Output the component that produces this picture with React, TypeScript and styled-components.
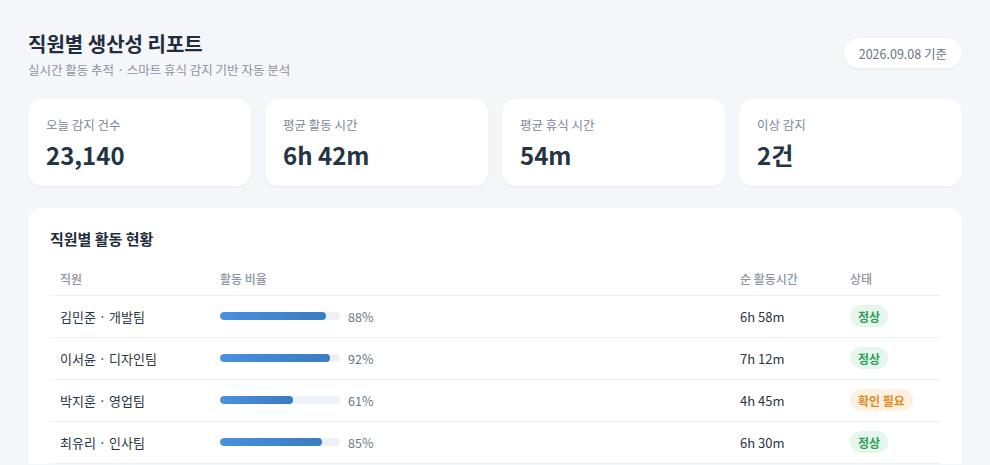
import React from "react";
import styled, { createGlobalStyle } from "styled-components";

const Global = createGlobalStyle`
  html, body { margin: 0; padding: 0; background: #f4f6fa; }
  body { font-family: "Noto Sans CJK KR", "Noto Sans", sans-serif; color: #1f2d3d; }
  * { box-sizing: border-box; }
`;

const Page = styled.div`
  padding: 29px 28px 0;
  display: flex;
  flex-direction: column;
`;

const Header = styled.header`
  display: flex;
  justify-content: space-between;
  align-items: flex-start;
  margin-bottom: 20px;
`;

const TitleBlock = styled.div`
  display: flex;
  flex-direction: column;
  gap: 2px;
`;

const Title = styled.h1`
  margin: 0;
  font-size: 20px;
  line-height: 30px;
  font-weight: 700;
  color: #1f2d3d;
`;

const Subtitle = styled.p`
  margin: 0;
  font-size: 12.5px;
  line-height: 18px;
  color: #8a94a3;
`;

const DatePill = styled.div`
  margin-top: 9px;
  background: #ffffff;
  border-radius: 15px;
  height: 30px;
  padding: 0 15px;
  display: flex;
  align-items: center;
  font-size: 12.5px;
  color: #6b7583;
  box-shadow: 0 1px 3px rgba(20, 30, 50, 0.06);
`;

const Stats = styled.div`
  display: grid;
  grid-template-columns: repeat(4, 1fr);
  gap: 14px;
  margin-bottom: 22px;
`;

const StatCard = styled.div`
  background: #fff;
  border-radius: 14px;
  height: 87px;
  padding: 17px 18px;
  display: flex;
  flex-direction: column;
  gap: 6px;
  box-shadow: 0 1px 3px rgba(20, 30, 50, 0.05);
`;

const StatLabel = styled.div`
  font-size: 12.5px;
  line-height: 18px;
  color: #7d8794;
`;

const StatValue = styled.div`
  font-size: 24px;
  line-height: 30px;
  font-weight: 700;
  color: #243447;
`;

const Panel = styled.section`
  background: #fff;
  border-radius: 14px 14px 0 0;
  padding: 20px 22px 0;
  box-shadow: 0 1px 3px rgba(20, 30, 50, 0.05);
`;

const PanelTitle = styled.h2`
  margin: 0 0 12px;
  font-size: 15px;
  line-height: 22px;
  font-weight: 700;
  color: #1f2d3d;
`;

const Table = styled.table`
  width: 100%;
  border-collapse: collapse;
  table-layout: fixed;
`;

const Th = styled.th<{ $w?: number }>`
  text-align: left;
  font-size: 12px;
  font-weight: 500;
  color: #8a94a3;
  padding: 0 10px;
  height: 33px;
  border-bottom: 1px solid #edf0f3;
  width: ${(p) => (p.$w ? `${p.$w}px` : "auto")};
`;

const Td = styled.td`
  font-size: 13px;
  color: #2a3442;
  padding: 0 10px;
  height: 42px;
  border-bottom: 1px solid #edf0f3;
`;

const BarWrap = styled.div`
  display: flex;
  align-items: center;
  gap: 8px;
`;

const Track = styled.div`
  width: 120px;
  height: 8px;
  border-radius: 4px;
  background: #edf0f4;
  overflow: hidden;
`;

const Fill = styled.div`
  height: 100%;
  border-radius: 4px;
  background: linear-gradient(90deg, #4a90e2, #3a7bc0);
`;

const Pct = styled.span`
  font-size: 12.5px;
  color: #6b7583;
`;

const Badge = styled.span<{ $warn?: boolean }>`
  display: inline-flex;
  align-items: center;
  height: 22px;
  padding: 0 8px;
  border-radius: 11px;
  font-size: 12px;
  font-weight: 700;
  background: ${(p) => (p.$warn ? "#fdf0e1" : "#e6f6ec")};
  color: ${(p) => (p.$warn ? "#e08a1e" : "#2f9e5a")};
`;

const stats = [
  { label: "오늘 감지 건수", value: "23,140" },
  { label: "평균 활동 시간", value: "6h 42m" },
  { label: "평균 휴식 시간", value: "54m" },
  { label: "이상 감지", value: "2건" },
];

const rows = [
  { name: "김민준 · 개발팀", pct: 88, time: "6h 58m", status: "정상" },
  { name: "이서윤 · 디자인팀", pct: 92, time: "7h 12m", status: "정상" },
  { name: "박지훈 · 영업팀", pct: 61, time: "4h 45m", status: "확인 필요" },
  { name: "최유리 · 인사팀", pct: 85, time: "6h 30m", status: "정상" },
];

export default function App() {
  return (
    <>
      <Global />
      <Page>
        <Header>
          <TitleBlock>
            <Title>직원별 생산성 리포트</Title>
            <Subtitle>실시간 활동 추적 · 스마트 휴식 감지 기반 자동 분석</Subtitle>
          </TitleBlock>
          <DatePill>2026.09.08 기준</DatePill>
        </Header>
        <Stats>
          {stats.map((s) => (
            <StatCard key={s.label}>
              <StatLabel>{s.label}</StatLabel>
              <StatValue>{s.value}</StatValue>
            </StatCard>
          ))}
        </Stats>
        <Panel>
          <PanelTitle>직원별 활동 현황</PanelTitle>
          <Table>
            <thead>
              <tr>
                <Th $w={160}>직원</Th>
                <Th>활동 비율</Th>
                <Th $w={110}>순 활동시간</Th>
                <Th $w={100}>상태</Th>
              </tr>
            </thead>
            <tbody>
              {rows.map((r) => (
                <tr key={r.name}>
                  <Td>{r.name}</Td>
                  <Td>
                    <BarWrap>
                      <Track>
                        <Fill style={{ width: `${r.pct}%` }} />
                      </Track>
                      <Pct>{r.pct}%</Pct>
                    </BarWrap>
                  </Td>
                  <Td>{r.time}</Td>
                  <Td>
                    <Badge $warn={r.status !== "정상"}>{r.status}</Badge>
                  </Td>
                </tr>
              ))}
            </tbody>
          </Table>
        </Panel>
      </Page>
    </>
  );
}
